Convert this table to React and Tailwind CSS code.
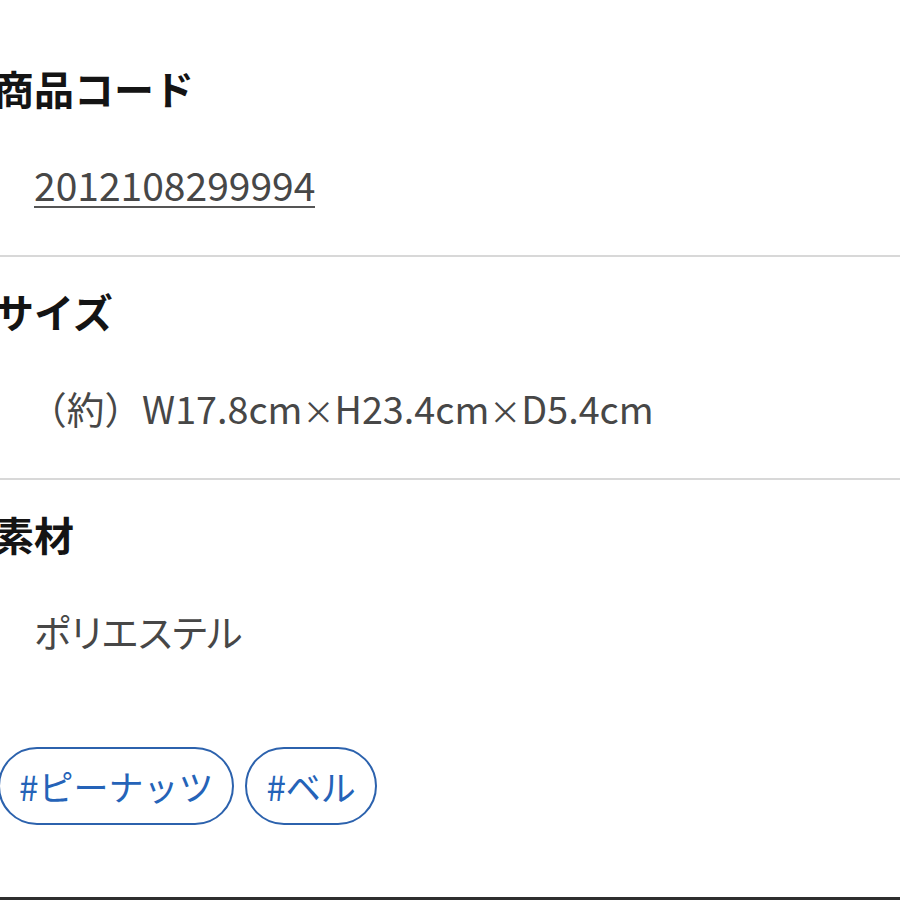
import React from 'react';

const font = { fontFamily: '"Noto Sans CJK JP", "Noto Sans", sans-serif' };

function Section({ title, children, first, divider = true }) {
  return (
    <div className={divider ? 'border-b-2 border-[#d8d8d8]' : ''}>
      <div className={first ? 'pt-[59px]' : 'pt-[25px]'}>
        <h2 className="-ml-[6px] h-[58px] text-[40px] leading-[58px] font-bold text-[#141414]">{title}</h2>
        <div className="mt-[39px] h-[58px] pl-[34px] text-[38px] leading-[58px] text-[#474747]">{children}</div>
      </div>
      {divider && <div className="h-[41px]" />}
    </div>
  );
}

export default function App() {
  const tags = ['#ピーナッツ', '#ベル'];
  return (
    <div className="w-[900px] h-[900px] overflow-hidden bg-white flex flex-col" style={font}>
      <Section title="商品コード" first>
        <span className="inline-block border-b-2 border-[#555] text-[39px] leading-[44px]">2012108299994</span>
      </Section>
      <Section title="サイズ">
        <span className="-ml-[5px] text-[37.7px]">
          （約）W17.8cm<span className="text-[32px]">×</span>H23.4cm<span className="text-[32px]">×</span>D5.4cm
        </span>
      </Section>
      <Section title="素材" divider={false}>
        <span className="[font-feature-settings:'palt']">ポリエステル</span>
      </Section>
      <div className="mt-[87px] -ml-[2px] flex gap-[11px]">
        {tags.map((t) => (
          <span
            key={t}
            className="h-[78px] px-[19px] rounded-full border-2 border-[#2c62ad] text-[#2563b8] text-[35px] flex items-center"
          >
            {t}
          </span>
        ))}
      </div>
      <div className="flex-1" />
      <div className="h-[3px] bg-[#2e2e2e]" />
    </div>
  );
}
